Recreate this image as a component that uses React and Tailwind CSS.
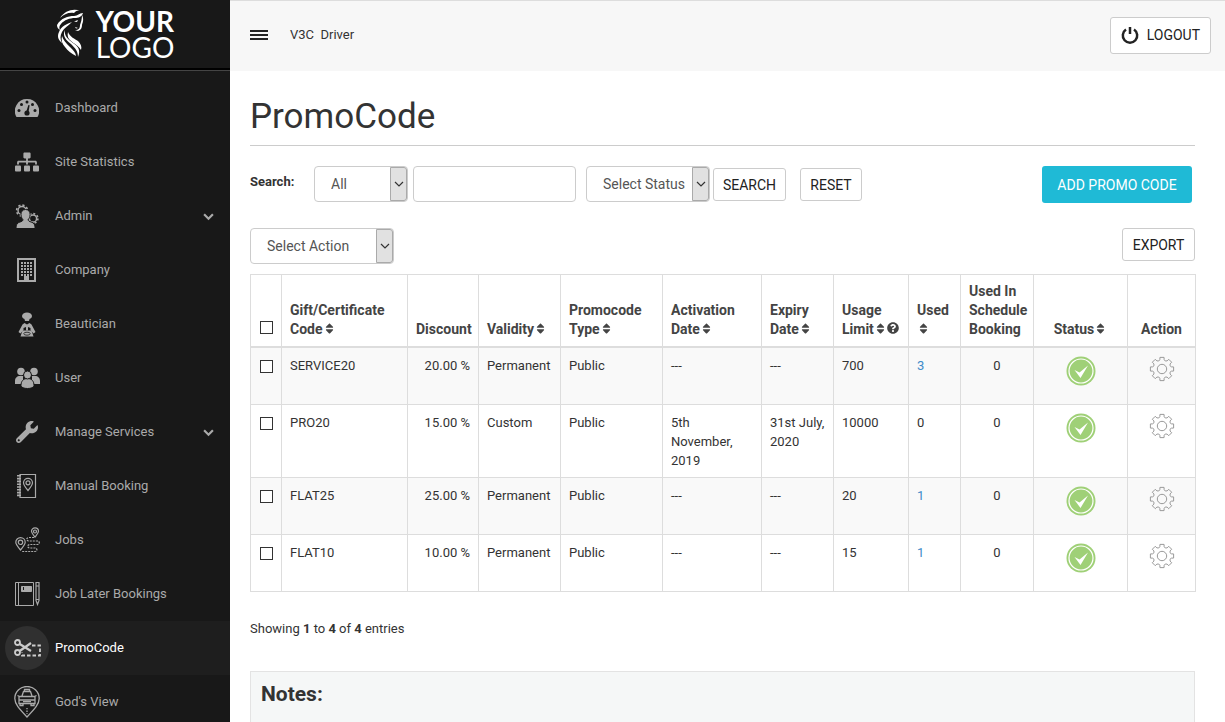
import React, { useState } from "react";
import { FaQuestionCircle, FaSitemap, FaSort, FaWrench } from "react-icons/fa";

const DashboardIcon = () => (
  <svg width="24" height="20" viewBox="0 0 24 20" fill="currentColor">
    <path d="M12 1A12 12 0 0 0 1.5 19h21A12 12 0 0 0 12 1z" />
    <g className="fill-[#181818]">
      <circle cx="12" cy="4" r="1.5" />
      <circle cx="6.5" cy="6.5" r="1.5" />
      <circle cx="17.5" cy="6.5" r="1.5" />
      <circle cx="4" cy="12.5" r="1.5" />
      <circle cx="20" cy="12.5" r="1.5" />
      <circle cx="12" cy="15" r="2.6" />
      <path d="M11.2 14l2.2-7 1.2.3-1.2 7.5z" />
    </g>
  </svg>
);

const AdminIcon = () => (
  <svg width="24" height="26" viewBox="0 0 24 26" fill="currentColor">
    <circle cx="7" cy="7.5" r="4" fill="none" stroke="currentColor" strokeWidth="1.5" />
    <circle cx="7" cy="7.5" r="5.4" fill="none" stroke="currentColor" strokeWidth="1.6" strokeDasharray="2.2 2" />
    <circle cx="18" cy="15.5" r="3.6" fill="none" stroke="currentColor" strokeWidth="1.5" />
    <circle cx="18" cy="15.5" r="4.9" fill="none" stroke="currentColor" strokeWidth="1.6" strokeDasharray="2 1.8" />
    <path
      className="stroke-[#181818]"
      d="M10.5 6.500c3 0 4.800 2.300 4.600 5.200-.2 2.400-1 4-2 5 .4 1.500 1 1.700 3 2.300 3 .9 4 2.500 4 6.500H1c0-4 1-5.600 4-6.500 2-.6 2.600-.8 3-2.300-1-1-1.800-2.600-2-5C5.800 8.800 7.500 6.500 10.500 6.500z"
    />
  </svg>
);

const CompanyIcon = () => (
  <svg width="20" height="24" viewBox="0 0 20 24">
    <rect x="1" y="1" width="17" height="22" fill="none" stroke="currentColor" strokeWidth="2" />
    <g stroke="currentColor" strokeWidth="2" strokeDasharray="2 1">
      <path d="M4 5h12M4 8h12M4 11h12M4 14h12M4 17h12" />
    </g>
    <path d="M7 18h5v5H7z" fill="currentColor" />
  </svg>
);

const BeauticianIcon = () => (
  <svg width="18" height="25" viewBox="0 0 18 25" fill="currentColor">
    <ellipse cx="9" cy="4" rx="5" ry="3.600" />
    <path d="M6.500 7h5l-.5 2H7zM6.500 11L9 12.500l2.500-1.500 2 1.500 4 7.500-2 1.500-3-3.500v-2L10 15v3.500H8V15l-2.500 1v2l-3 3.500L.5 20l4-7.500z" />
    <path d="M4.500 18.500h9l2 6h-13z" />
    <ellipse className="stroke-[#181818]" cx="9" cy="21.700" rx="3.200" ry="1.500" strokeWidth=".8" />
  </svg>
);

const UserIcon = () => (
  <svg width="25" height="22" viewBox="0 0 25 22" fill="currentColor">
    <circle cx="6" cy="4.500" r="3.800" />
    <circle cx="19" cy="4.500" r="3.800" />
    <path d="M0 17v-3c0-3 2-5 5-5h3v8zM25 17v-3c0-3-2-5-5-5h-3v8z" />
    <g className="stroke-[#181818]">
      <path d="M6 18.500c0-4 2-7 6.500-7s6.500 3 6.500 7c0 4-13 4-13 0z" />
      <circle cx="12.500" cy="8" r="4" />
    </g>
  </svg>
);

const BookingIcon = () => (
  <svg width="22" height="26" viewBox="0 0 22 26" fill="none" stroke="currentColor">
    <path d="M4 1.500h15.500v23H4z" strokeWidth="1.200" />
    <path d="M3 2v22" strokeWidth="4" strokeDasharray="1.600 1.200" />
    <path d="M12 17.500c-3-3.500-4.500-5.500-4.500-7.700a4.500 4.500 0 0 1 9 0c0 2.200-1.500 4.200-4.500 7.700z" strokeWidth="1.200" />
    <circle cx="12" cy="9.800" r="2" strokeWidth="1.200" />
  </svg>
);

const JobsIcon = () => (
  <svg width="25" height="26" viewBox="0 0 25 26" fill="none" stroke="currentColor" strokeWidth="1.200">
    <path d="M5.500 23C2.500 19.500.8 17.500.8 15.300a4.700 4.700 0 0 1 9.400 0c0 2.200-1.700 4.200-4.700 7.700z" />
    <circle cx="5.500" cy="15.300" r="2.200" />
    <path d="M20 10c-2.300-2.800-3.500-4-3.500-5.700a3.500 3.500 0 0 1 7 0C23.500 6 22.300 7.200 20 10z" />
    <circle cx="20" cy="4.500" r="1.500" />
    <path d="M19 10.500h-5c-3 0-3 3.500 0 3.500h8c3 0 3 3.500 0 3.500h-7c-3 0-3 3.500 0 3.500h5c2.500 0 2.500 3.500 0 3.500H7" strokeDasharray="2 1" />
  </svg>
);

const LaterIcon = () => (
  <svg width="25" height="26" viewBox="0 0 25 26" fill="none" stroke="currentColor">
    <path d="M.5 1.500h18v23H.5zM3.500 1.500v23" />
    <path d="M6.500 5.500h10v5h-10z" fill="currentColor" />
    <path className="stroke-[#181818]" d="M8.500 6v3" />
    <path d="M21 1.500h3v18l-1.500 4-1.500-4zM21 5h3M21 18.500h3" strokeWidth="1.200" />
  </svg>
);

const PromoIcon = () => (
  <svg width="27" height="18" viewBox="0 0 27 18" fill="none" stroke="currentColor" strokeWidth="1.800">
    <circle cx="3.500" cy="3.500" r="2.500" />
    <circle cx="3.500" cy="13.500" r="2.500" />
    <path d="M5.700 5l11.300 7M5.700 12L17 4" strokeWidth="2.200" />
    <path d="M18 6.500h8V16.500H8v-3" strokeDasharray="3.500 2" />
  </svg>
);

const GodsViewIcon = () => (
  <svg width="26" height="32" viewBox="0 0 26 32" fill="none" stroke="currentColor" strokeWidth="1.300">
    <path d="M13 31C5 22.500.8 18 .8 12.500a12.200 12 0 0 1 24.400 0C25.200 18 21 22.500 13 31z" />
    <path d="M10.500 5.500v-2h5v2M8 10l1.500-4.500h7L18 10M5 10.500h16v7H5zM5 14h16M9 15.700h8M6 17.500v2h3v-2M17 17.500v2h3v-2M3.500 9.500l2 1M22.500 9.500l-2 1" />
    <path d="M13 22v6" strokeDasharray="1.300 1.300" />
  </svg>
);

const LogoMark = () => (
  <svg width="28" height="50" viewBox="0 0 28 50" fill="currentColor">
    <path d="M4 10C9 2 18 0 25 3c-4-1-5 0-7 2C13 4 8 6 4 10z" />
    <path d="M1 17C5 10 12 8 18 8c4 0 5-3 9-3-1 4-5 5-8 5-5 0-11 2-14 6-2 2-2 4-1 6-2-1-3-3-3-5z" />
    <path d="M3 24c2-6 8-8 13-10-4 4-8 6-10 10-2 4-2 7 0 11-4-3-5-7-3-11z" />
    <path d="M9 22c-1 6 3 9 8 13 5 3 8 7 5 14 0-6-3-9-7-13C10 32 6 28 9 22z" />
    <path d="M12 24c2 5 7 7 10 9 3 3 4 6 3 9-3-5-7-6-10-9-3-2-4-5-3-9z" />
    <path d="M6 28c1 4 4 7 8 11 3 3 6 6 6 9-5-3-8-5-11-9-3-3-4-7-3-11z" />
    <path d="M26 7c2 4 1 7 0 10 0 3-1 5-4 6l-3-1c4 0 5-2 5-5 1-3 2-6 2-10zM18 13.500l4-1.500-1 2zM19 19l3 1-2 .5z" />
  </svg>
);

const menu = [
  { label: "Dashboard", icon: <DashboardIcon /> },
  { label: "Site Statistics", icon: <FaSitemap size={24} /> },
  { label: "Admin", icon: <AdminIcon />, sub: true },
  { label: "Company", icon: <CompanyIcon /> },
  { label: "Beautician", icon: <BeauticianIcon /> },
  { label: "User", icon: <UserIcon /> },
  { label: "Manage Services", icon: <FaWrench size={22} />, sub: true },
  { label: "Manual Booking", icon: <BookingIcon /> },
  { label: "Jobs", icon: <JobsIcon /> },
  { label: "Job Later Bookings", icon: <LaterIcon /> },
  { label: "PromoCode", icon: <PromoIcon />, active: true },
  { label: "God's View", icon: <GodsViewIcon /> },
];

const columns = [
  { title: "Gift/Certificate Code", width: "w-[126px]", sort: true },
  { title: "Discount", width: "w-[71px]", align: "text-right pr-2" },
  { title: "Validity", width: "w-[82px]", sort: true },
  { title: "Promocode Type", width: "w-[102px]", sort: true },
  { title: "Activation Date", width: "w-[99px]", sort: true },
  { title: "Expiry Date", width: "w-[72px]", sort: true },
  { title: "Usage Limit", width: "w-[75px]", sort: true, help: true },
  { title: "Used", width: "w-[52px]", sort: true },
  { title: "Used In Schedule Booking", width: "w-[73px]" },
  { title: "Status", width: "w-[94px]", sort: true, align: "text-center pr-2" },
  { title: "Action", width: "w-[68px]", align: "text-center pr-2" },
];

const promos = [
  { code: "SERVICE20", discount: "20.00 %", validity: "Permanent", from: "---", to: "---", limit: 700, used: 3 },
  { code: "PRO20", discount: "15.00 %", validity: "Custom", from: "5th November, 2019", to: "31st July, 2020", limit: 10000, used: 0 },
  { code: "FLAT25", discount: "25.00 %", validity: "Permanent", from: "---", to: "---", limit: 20, used: 1 },
  { code: "FLAT10", discount: "10.00 %", validity: "Permanent", from: "---", to: "---", limit: 15, used: 1 },
];

const cell = "border border-[#ddd] px-2 pt-2 pb-[7px] align-top";
const button = "border border-[#ccc] rounded-[3px] bg-white text-sm text-[#222] hover:bg-gray-50";

const Chevron = ({ size = 10 }) => (
  <svg width={size} height={size} viewBox="0 0 10 10" fill="none" stroke="currentColor">
    <path d="M1 3l4 4 4-4" strokeWidth={size > 10 ? 2 : 1.2} />
  </svg>
);

const StatusIcon = () => (
  <svg width="30" height="30" viewBox="0 0 30 30" className="block mx-auto">
    <circle cx="15" cy="15" r="14.500" fill="#9fd077" />
    <circle cx="15" cy="15" r="12" fill="none" stroke="#fff" strokeWidth="1.200" />
    <path d="M8.500 14l5 2.500 8.500-7-7.500 12.500z" fill="#fff" />
  </svg>
);

// Outline of a cog with eight teeth, centred on 13,13
const point = (radius, degrees) => {
  const a = (degrees * Math.PI) / 180;
  return `${(13 + radius * Math.cos(a)).toFixed(2)} ${(13 + radius * Math.sin(a)).toFixed(2)}`;
};
const gearPath =
  [0, 45, 90, 135, 180, 225, 270, 315]
    .map(
      (deg, i) =>
        `${i ? "L" : "M"}${point(9.6, deg - 13)}L${point(11.8, deg - 10)}L${point(11.8, deg + 10)}L${point(9.6, deg + 13)}Q${point(7.8, deg + 22.5)} ${point(9.6, deg + 32)}`
    )
    .join("") + "Z";

const GearIcon = () => (
  <svg width="26" height="26" viewBox="0 0 26 26" fill="none" stroke="#999" className="block mx-auto">
    <path d={gearPath} strokeLinejoin="round" />
    <circle cx="13" cy="13" r="4.700" />
  </svg>
);

const SelectBox = ({ label, option, className }) => (
  <div className={`relative h-9 ${className}`}>
    <select
      aria-label={label}
      className="w-full h-full appearance-none border border-[#ccc] rounded bg-white pl-4 pr-5 text-[#555] text-sm"
    >
      <option>{option}</option>
    </select>
    <span className="absolute right-px inset-y-px w-[17px] flex items-center justify-center rounded-r-[3px] border border-[#aaa] bg-[#e1e1e1] text-[#333] pointer-events-none">
      <Chevron />
    </span>
  </div>
);

const CheckBox = ({ label, checked, onChange }) => (
  <input
    type="checkbox"
    aria-label={label}
    checked={checked}
    onChange={onChange}
    className="block appearance-none size-[13px] mx-auto border border-[#333] bg-white checked:bg-[#333]"
  />
);

const Sidebar = () => (
  <aside className="w-[230px] shrink-0 bg-[#181818] text-[#aaa] overflow-hidden">
    <div className="flex justify-center gap-3 h-[70px] pt-2 border-b-2 border-black text-white font-[Lato,sans-serif] text-[28px] leading-[26px]">
      <LogoMark />
      <div>
        <div className="font-bold">YOUR</div>
        <div>LOGO</div>
      </div>
    </div>
    <nav className="border-t border-[#444] pt-[10px]">
      {menu.map((item) => (
        <a
          key={item.label}
          href="#"
          className={`flex items-center h-[54px] pl-[5px] pr-4 ${item.active ? "bg-[#1e1e1e] text-white" : ""}`}
        >
          <span
            className={`flex items-center justify-center size-11 mr-[6px] rounded-full ${item.active ? "bg-[#303030] text-[#ccc]" : ""}`}
          >
            {item.icon}
          </span>
          <span className="flex-1">{item.label}</span>
          {item.sub && <Chevron size={11} />}
        </a>
      ))}
    </nav>
  </aside>
);

const PromoTable = () => {
  const [selected, setSelected] = useState([]);

  const toggle = (code) => {
    setSelected(selected.includes(code) ? selected.filter((c) => c !== code) : [...selected, code]);
  };

  const toggleAll = () => {
    setSelected(selected.length === promos.length ? [] : promos.map((p) => p.code));
  };

  return (
    <table className="w-full mt-[10px] table-fixed border-collapse leading-[19px]">
      <thead>
        <tr className="text-sm leading-[19px] text-[#444]">
          <th className="w-[31px] border border-b-2 border-[#ddd] pb-3 align-bottom">
            <CheckBox label="Select all" checked={selected.length === promos.length} onChange={toggleAll} />
          </th>
          {columns.map((col) => (
            <th
              key={col.title}
              className={`${col.width} ${col.align || "text-left pr-1"} border border-b-2 border-[#ddd] pl-2 pt-[7px] pb-[7px] align-bottom font-bold`}
            >
              {col.title}
              {col.sort && <FaSort className="inline -mt-1" size={13} />}
              {col.help && <FaQuestionCircle className="inline -mt-1" size={12} />}
            </th>
          ))}
        </tr>
      </thead>
      <tbody>
        {promos.map((p) => (
          <tr key={p.code} className="h-[57px] odd:bg-[#f9f9f9]">
            <td className="border border-[#ddd] pt-3 align-top">
              <CheckBox label={`Select ${p.code}`} checked={selected.includes(p.code)} onChange={() => toggle(p.code)} />
            </td>
            <td className={cell}>{p.code}</td>
            <td className={`${cell} text-right`}>{p.discount}</td>
            <td className={cell}>{p.validity}</td>
            <td className={cell}>Public</td>
            <td className={cell}>{p.from}</td>
            <td className={cell}>{p.to}</td>
            <td className={cell}>{p.limit}</td>
            <td className={cell}>
              {p.used > 0 ? <a href="#" className="text-[#428bca]">{p.used}</a> : p.used}
            </td>
            <td className={`${cell} text-center`}>0</td>
            <td className={cell}>
              <StatusIcon />
            </td>
            <td className={cell}>
              <button type="button" aria-label="Actions" className="block mx-auto">
                <GearIcon />
              </button>
            </td>
          </tr>
        ))}
      </tbody>
    </table>
  );
};

export default function App() {
  return (
    <div className="flex h-screen overflow-hidden bg-white font-[Roboto,sans-serif] text-[13px] text-[#333]">
      <Sidebar />

      <div className="flex-1 min-w-0 flex flex-col">
        {/* Top bar */}
        <header className="flex items-center h-[71px] shrink-0 border-t border-[#ddd] bg-[#f7f7f7] pl-5 pr-[14px] pb-[2px]">
          <button type="button" aria-label="Toggle menu" className="flex flex-col gap-[2px] mr-[22px]">
            <span className="block w-[18px] h-[2px] bg-[#222]" />
            <span className="block w-[18px] h-[2px] bg-[#222]" />
            <span className="block w-[18px] h-[2px] bg-[#222]" />
          </button>
          <span className="flex-1 whitespace-pre">V3C  Driver</span>
          <button type="button" className={`${button} flex items-center gap-2 h-[37px] px-[10px]`}>
            <svg width="18" height="18" viewBox="0 0 18 18" fill="none" stroke="currentColor" strokeWidth="2.500">
              <path d="M5 3.500a7.200 7.200 0 1 0 8 0M9 1v7" />
            </svg>
            LOGOUT
          </button>
        </header>

        <main className="flex-1 min-h-0 flex flex-col pl-5 pr-[30px] pt-[21px]">
          <h1 className="text-[35px] leading-[50px] pb-[3px] border-b border-[#ccc]">PromoCode</h1>

          {/* Filters */}
          <form className="flex items-start mt-5 h-[37px] shrink-0" onSubmit={(e) => e.preventDefault()}>
            <label htmlFor="keyword" className="w-16 leading-8 font-bold">
              Search:
            </label>
            <SelectBox label="Search field" option="All" className="w-[94px] mr-[5px]" />
            <input id="keyword" type="text" className="w-[163px] h-9 mr-[10px] px-3 border border-[#ccc] rounded" />
            <SelectBox label="Status" option="Select Status" className="w-[124px] mr-[3px]" />
            <div className="flex gap-[14px] pt-[2px]">
              <button type="submit" className={`${button} h-[33px] w-[73px]`}>
                SEARCH
              </button>
              <button type="reset" className={`${button} h-[33px] w-[62px]`}>
                RESET
              </button>
            </div>
            <button type="button" className="ml-auto mr-[3px] h-[37px] w-[150px] rounded-[3px] bg-[#1fbad6] text-sm text-white">
              ADD PROMO CODE
            </button>
          </form>

          <div className="flex items-start justify-between mt-[25px] h-9 shrink-0">
            <SelectBox label="Bulk action" option="Select Action" className="w-[144px]" />
            <button type="button" className={`${button} h-[33px] w-[73px]`}>
              EXPORT
            </button>
          </div>

          <PromoTable />

          <p className="mt-[27px] leading-5">
            Showing <b>1</b> to <b>4</b> of <b>4</b> entries
          </p>

          <section className="flex-1 mt-8 border border-b-0 border-[#e3e3e3] bg-[#f5f7f7] px-[10px] pt-2">
            <h2 className="text-[21px] leading-7 font-bold">Notes:</h2>
          </section>
        </main>
      </div>
    </div>
  );
}
